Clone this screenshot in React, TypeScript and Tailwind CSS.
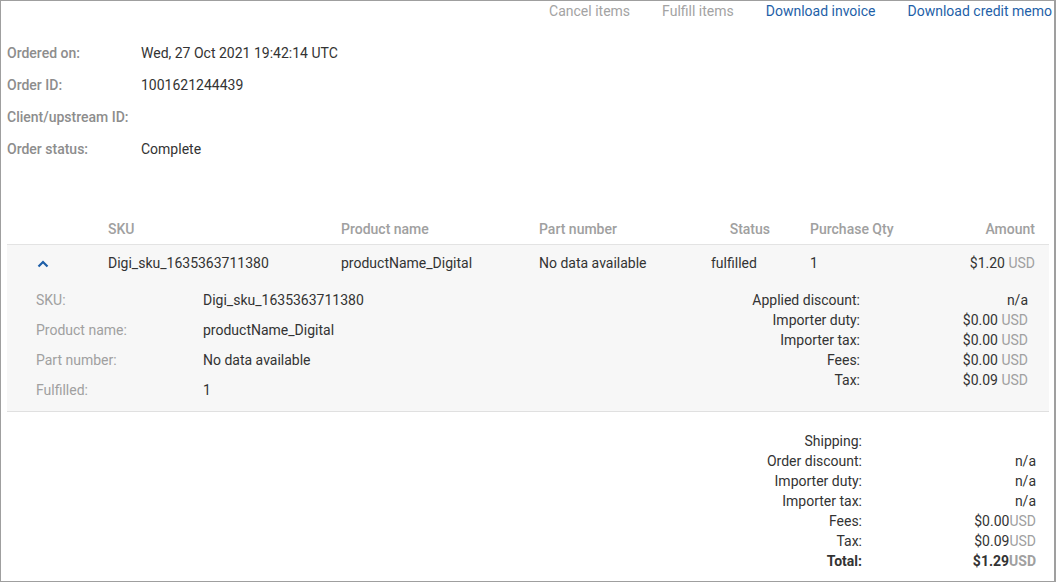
const info = [
  { label: "Ordered on:", value: "Wed, 27 Oct 2021 19:42:14 UTC" },
  { label: "Order ID:", value: "1001621244439" },
  { label: "Client/upstream ID:", value: "" },
  { label: "Order status:", value: "Complete" },
];

const itemDetails = [
  { label: "SKU:", value: "Digi_sku_1635363711380" },
  { label: "Product name:", value: "productName_Digital" },
  { label: "Part number:", value: "No data available" },
  { label: "Fulfilled:", value: "1" },
];

const itemCharges = [
  { label: "Applied discount:", value: "n/a" },
  { label: "Importer duty:", value: "$0.00", usd: true },
  { label: "Importer tax:", value: "$0.00", usd: true },
  { label: "Fees:", value: "$0.00", usd: true },
  { label: "Tax:", value: "$0.09", usd: true },
];

const totals = [
  { label: "Shipping:", value: "" },
  { label: "Order discount:", value: "n/a" },
  { label: "Importer duty:", value: "n/a" },
  { label: "Importer tax:", value: "n/a" },
  { label: "Fees:", value: "$0.00", usd: true },
  { label: "Tax:", value: "$0.09", usd: true },
];

const cols = "grid grid-cols-[101px_233px_198px_141px_110px_140px_1fr]";

export default function App() {
  return (
    <div
      className="w-[1056px] h-[582px] border border-r-2 border-[#9f9f9f] bg-white text-sm text-[#333333] overflow-hidden"
      style={{ fontFamily: "Roboto, 'Liberation Sans', sans-serif" }}
    >
      {/* Actions */}
      <div className="h-[20px] flex items-center justify-end gap-8 pr-[2px]">
        <button className="text-[#a3a3a3]">Cancel items</button>
        <button className="text-[#a3a3a3]">Fulfill items</button>
        <button className="text-[#1e5fa8]">Download invoice</button>
        <button className="text-[#1e5fa8]">Download credit memo</button>
      </div>

      {/* Order info */}
      <div className="pt-[16px] pl-[6px]">
        {info.map((row) => (
          <div key={row.label} className="h-[32px] flex items-center">
            <div className="w-[134px] font-medium text-[#8d8d8d]">{row.label}</div>
            <div>{row.value}</div>
          </div>
        ))}
      </div>

      {/* Items table */}
      <div className="mt-[48px] ml-[6px] w-[1042px]">
        <div className={`${cols} h-[32px] items-center border-b border-[#e3e3e3] font-medium text-[#a0a0a0]`}>
          <div />
          <div>SKU</div>
          <div>Product name</div>
          <div>Part number</div>
          <div className="text-right pr-5">Status</div>
          <div className="pl-5">Purchase Qty</div>
          <div className="text-right pr-[14px]">Amount</div>
        </div>

        <div className="bg-[#f7f7f7] border-b border-[#e0e0e0]">
          <div className={`${cols} h-[36px] items-center`}>
            <div className="pl-[30px] flex items-center">
              <svg width="12" height="8" viewBox="0 0 12 8" className="mt-[1px]">
                <polyline points="1.5,6.5 6,2 10.5,6.5" fill="none" stroke="#1e5fa8" strokeWidth="2.2" />
              </svg>
            </div>
            <div>Digi_sku_1635363711380</div>
            <div>productName_Digital</div>
            <div>No data available</div>
            <div className="pl-[31px]">fulfilled</div>
            <div className="pl-5">1</div>
            <div className="text-right pr-[14px]">
              $1.20 <span className="text-[#a0a0a0]">USD</span>
            </div>
          </div>

          <div className="flex pt-[4px] pb-[6px]">
            <div className="ml-[29px]">
              {itemDetails.map((row) => (
                <div key={row.label} className="h-[30px] flex items-center">
                  <div className="w-[167px] text-[#a0a0a0]">{row.label}</div>
                  <div>{row.value}</div>
                </div>
              ))}
            </div>
            <div className="ml-auto mr-[21px] mt-[5px]">
              {itemCharges.map((row) => (
                <div key={row.label} className="h-[20px] flex items-center justify-end">
                  <div className="text-right">{row.label}</div>
                  <div className="w-[168px] text-right">
                    {row.value}
                    {row.usd && <span className="text-[#a0a0a0]"> USD</span>}
                  </div>
                </div>
              ))}
            </div>
          </div>
        </div>

        {/* Totals */}
        <div className="flex justify-end pt-[19px] mr-[13px]">
          <div>
            {totals.map((row) => (
              <div key={row.label} className="h-[20px] flex items-center justify-end">
                <div className="text-right">{row.label}</div>
                <div className="w-[174px] text-right">
                  {row.value}
                  {row.usd && <span className="text-[#a0a0a0]">USD</span>}
                </div>
              </div>
            ))}
            <div className="h-[20px] flex items-center justify-end font-bold">
              <div className="text-right">Total:</div>
              <div className="w-[174px] text-right">
                $1.29<span className="text-[#a0a0a0]">USD</span>
              </div>
            </div>
          </div>
        </div>
      </div>
    </div>
  );
}
